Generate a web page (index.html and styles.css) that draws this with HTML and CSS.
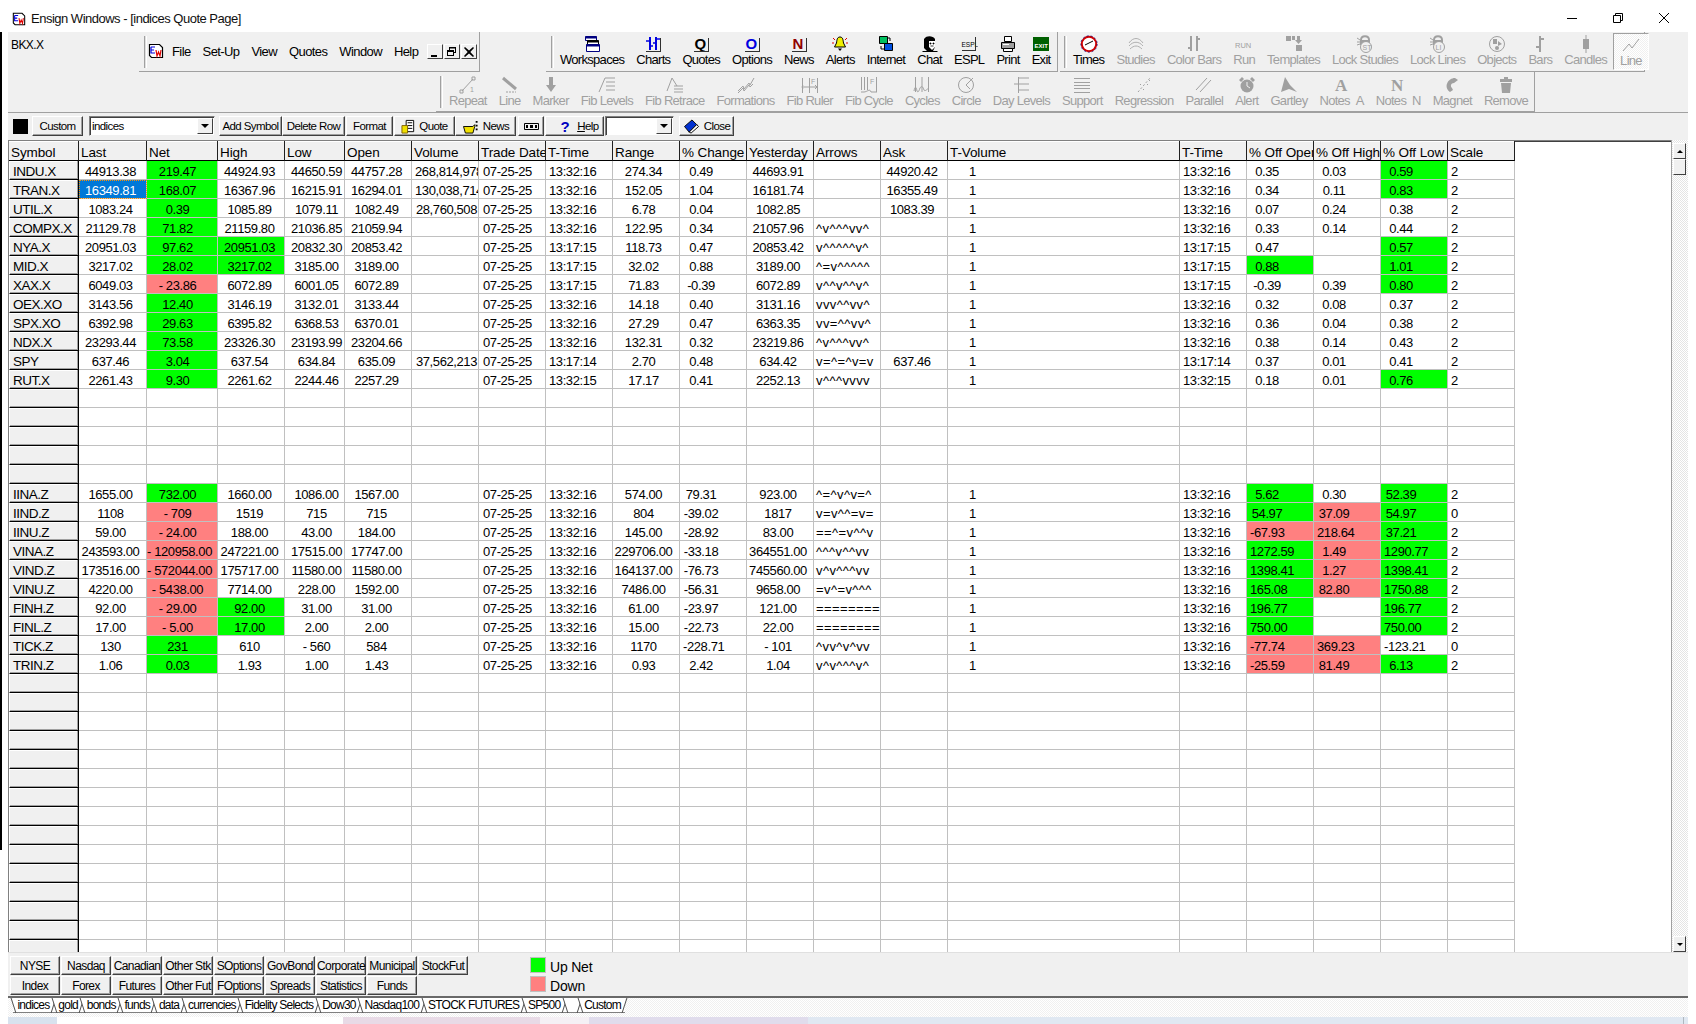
FILE: index.html
```html
<!DOCTYPE html>
<html lang="en">
<head>
<meta charset="utf-8">
<title>Ensign Windows - [indices Quote Page]</title>
<link rel="stylesheet" href="styles.css">
</head>
<body>
<svg class="defs" width="0" height="0" aria-hidden="true">
  <symbol id="ew" viewBox="0 0 16 16">
    <path d="M1.5 1.5h10l3 3v10h-11l-2-2z" fill="#fff" stroke="#000" stroke-width="1.2"/>
    <path d="M3 4v6h4M3 4h4M3 7h3" fill="none" stroke="#0000e0" stroke-width="1.2"/>
    <path d="M8 7l1 6 1.5-4 1.5 4 1-6" fill="none" stroke="#e00000" stroke-width="1.2"/>
  </symbol>
</svg>
<div class="edge"></div>
<header class="titlebar">
  <svg class="title-icon"><use href="#ew"/></svg>
  <span class="title-text">Ensign Windows - [indices Quote Page]</span>
  <div class="winctl">
    <svg width="12" height="12" viewBox="0 0 12 12"><path d="M1 6.5h10" stroke="#000" fill="none"/></svg>
    <svg width="12" height="12" viewBox="0 0 12 12"><path d="M1.5 3.5h7v7h-7zM3.5 3V1.5h7v7H9" stroke="#000" fill="none"/></svg>
    <svg width="12" height="12" viewBox="0 0 12 12"><path d="M1 1l10 10M11 1L1 11" stroke="#000" fill="none"/></svg>
  </div>
</header>
<div class="app">
  <div class="row-one">
    <div class="current-symbol">BKX.X</div>
    <div class="band menu-band">
      <i class="grip"></i>
      <svg class="menu-icon"><use href="#ew"/></svg>
      <nav class="menu"><span>File</span><span>Set-Up</span><span>View</span><span>Quotes</span><span>Window</span><span>Help</span></nav>
      <div class="mdi">
        <button class="mdi-btn"><svg width="12" height="10" viewBox="0 0 12 10"><path d="M2 8h6v2H2z"/></svg></button>
        <button class="mdi-btn"><svg width="12" height="10" viewBox="0 0 12 10"><path d="M3 0h7v6H8v3H1V3h2zM4 1.5V3h4v2h1V1.5zM2 5v3h5V5z" fill-rule="evenodd"/></svg></button>
        <button class="mdi-btn"><svg width="12" height="10" viewBox="0 0 12 10"><path d="M2 0l4 3.5L10 0l1 1-3.7 4L11 9l-1 1-4-3.5L2 10 1 9l3.7-4L1 1z"/></svg></button>
      </div>
    </div>
    <div class="band main-band">
      <i class="grip"></i>
      <div class="tb"><svg class="ic" viewBox="0 0 18 18"><path d="M2.5 1.5h11v4h-11z" fill="#fff" stroke="#000080"/><path d="M2.5 1.5h11v2h-11z" fill="#000080"/><path d="M4.5 5.5h11v4h-11z" fill="#fff" stroke="#000"/><path d="M4.5 5.5h11v2h-11z" fill="#000"/><path d="M3.5 9.5h13v7h-13z" fill="#fff" stroke="#000080"/><path d="M3.5 9.5h13v2h-13z" fill="#000080"/></svg><span>Workspaces</span></div>
      <div class="tb"><svg class="ic" viewBox="0 0 18 18"><path d="M6 2v13M12 2v13" stroke="#0000e0" stroke-width="2" fill="none"/><path d="M2 6h4M6 11h3M9 8h3M12 4h4" stroke="#0000e0" stroke-width="1.6" fill="none"/><path d="M2 16.5h14M16.5 3v14" stroke="#303030" fill="none"/></svg><span>Charts</span></div>
      <div class="tb"><svg class="ic" viewBox="0 0 18 18"><text x="2.5" y="14" class="ic-letter">Q</text><path d="M2 16.5h14M16.5 3v14" stroke="#303030" fill="none"/></svg><span>Quotes</span></div>
      <div class="tb"><svg class="ic" viewBox="0 0 18 18"><text x="2.5" y="14" class="ic-letter ic-blue">O</text><path d="M2 16.5h14M16.5 3v14" stroke="#303030" fill="none"/></svg><span>Options</span></div>
      <div class="tb"><svg class="ic" viewBox="0 0 18 18"><text x="2.5" y="14" class="ic-letter ic-red">N</text><path d="M2 16.5h14M16.5 3v14" stroke="#303030" fill="none"/></svg><span>News</span></div>
      <div class="tb"><svg class="ic" viewBox="0 0 18 18"><path d="M9 2c3 0 3 3 3.500 6l2 4H3.500l2-4C6 5 6 2 9 2z" fill="#f0f000" stroke="#000"/><path d="M7 13.500h4l-2 2.500z"/><path d="M2 3l2 2M16 3l-2 2M1 8h2M17 8h-2" stroke="#e00000" fill="none"/></svg><span>Alerts</span></div>
      <div class="tb"><svg class="ic" viewBox="0 0 18 18"><path d="M2.500 1.500h8v7h-8z" fill="#00c060" stroke="#000"/><path d="M7.500 8.500h8v7h-8z" fill="#0050e0" stroke="#000"/><path d="M4 11v3h3M13 6V3h-2" fill="none" stroke="#000"/></svg><span>Internet</span></div>
      <div class="tb"><svg class="ic" viewBox="0 0 18 18"><path d="M3 4c3-4 9-3 11 0v8l-2 4H6l-3-3z"/><path d="M8 6h6v6l-3 3-3-3z" fill="#fff"/><path d="M9 8h1v1H9zM12 8h1v1h-1zM9.500 11h3" stroke="#000" stroke-width=".8"/><path d="M1.500 16.500h15" stroke="#000"/></svg><span>Chat</span></div>
      <div class="tb"><svg class="ic" viewBox="0 0 18 18"><text x="1.500" y="12" class="ic-small">ESPL</text><path d="M2 15.500h13M15.500 2v14" stroke="#303030" fill="none"/></svg><span>ESPL</span></div>
      <div class="tb"><svg class="ic" viewBox="0 0 18 18"><path d="M5.500 1.500h7v5h-7z" fill="#fff" stroke="#000"/><path d="M2.500 7.500h13v6h-13z" fill="#a0a0a0" stroke="#000"/><path d="M4.500 13.500h9v3h-9z" fill="#fff" stroke="#000"/><path d="M4 9.500h6" stroke="#fff"/></svg><span>Print</span></div>
      <div class="tb"><svg class="ic" viewBox="0 0 18 18"><rect x="1" y="2" width="16" height="14" fill="#006000"/><text x="2.500" y="12.500" class="ic-exit">EXIT</text></svg><span>Exit</span></div>
    </div>
    <div class="band draw-band">
      <i class="grip"></i>
      <div class="tb"><svg class="ic" viewBox="0 0 18 18"><circle cx="9" cy="9" r="7.200" fill="#fff" stroke="#d00000" stroke-width="2"/><circle cx="9" cy="9" r="8.200" fill="none" stroke="#000080" stroke-width=".7" stroke-dasharray="2 2"/><path d="M5 10l4-2 4-2" stroke="#000" fill="none"/></svg><span>Times</span></div>
      <div class="tb off"><svg class="ic" viewBox="0 0 18 18"><path d="M2 8c4-6 10-6 14 0M2 11c4-5 10-5 14 0M3 14c4-4 8-4 12 0" stroke="#b0b0b0" fill="none"/></svg><span>Studies</span></div>
      <div class="tb off"><svg class="ic" viewBox="0 0 18 18"><path d="M6 1v15M12 1v15" stroke="#a0a0a0" stroke-width="2" fill="none"/><path d="M3 13h3M12 4h3" stroke="#a0a0a0" stroke-width="2" fill="none"/></svg><span>Color Bars</span></div>
      <div class="tb off"><svg class="ic" viewBox="0 0 18 18"><text x="0" y="13" class="ic-run">RUN</text></svg><span>Run</span></div>
      <div class="tb off"><svg class="ic" viewBox="0 0 18 18"><path d="M1 1h5v5H1zM7 1h3v4H7zM11 16V10h6v6z" fill="#a0a0a0"/><path d="M12 1h3v4h2l-3.500 4L10 5h2z" fill="#a0a0a0"/></svg><span>Templates</span></div>
      <div class="tb off"><svg class="ic" viewBox="0 0 18 18"><path d="M5 5c0-5 8-5 8 0" fill="none" stroke="#a0a0a0" stroke-width="2"/><rect x="4" y="5" width="10" height="5" fill="#a0a0a0"/><circle cx="10" cy="12" r="5.500" fill="#f0f0f0" stroke="#a0a0a0"/><path d="M1 3l3 2M1 7h3M1 10l3-1" stroke="#a0a0a0" fill="none"/><text x="6.500" y="14.500" class="ic-tiny">ST</text></svg><span>Lock Studies</span></div>
      <div class="tb off"><svg class="ic" viewBox="0 0 18 18"><path d="M5 5c0-5 8-5 8 0" fill="none" stroke="#a0a0a0" stroke-width="2"/><rect x="4" y="5" width="10" height="5" fill="#a0a0a0"/><circle cx="10" cy="12" r="5.500" fill="#f0f0f0" stroke="#a0a0a0"/><path d="M1 3l3 2M1 7h3M1 10l3-1" stroke="#a0a0a0" fill="none"/><text x="6.500" y="14.500" class="ic-tiny">LI</text></svg><span>Lock Lines</span></div>
      <div class="tb off"><svg class="ic" viewBox="0 0 18 18"><circle cx="9" cy="9" r="7.500" fill="none" stroke="#a0a0a0"/><path d="M5 4h4v5H5zM10 6l4 3-4 2z" fill="#a0a0a0"/><circle cx="9" cy="13" r="2" fill="#a0a0a0"/></svg><span>Objects</span></div>
      <div class="tb off"><svg class="ic" viewBox="0 0 18 18"><path d="M9 1v16" stroke="#a0a0a0" stroke-width="2"/><path d="M5 12h4M9 4h4" stroke="#a0a0a0" stroke-width="2"/></svg><span>Bars</span></div>
      <div class="tb off"><svg class="ic" viewBox="0 0 18 18"><path d="M9 0v18" stroke="#a0a0a0"/><rect x="6" y="4" width="6" height="10" fill="#a0a0a0"/></svg><span>Candles</span></div>
      <div class="tb off tb-line"><svg class="ic" viewBox="0 0 18 18"><path d="M1 15l6-7 3 4 7-9" stroke="#a0a0a0" fill="none"/></svg><span>Line</span></div>
    </div>
  </div>
  <div class="row-two">
    <div class="band tools-band">
      <i class="grip"></i>
      <div class="tb off"><svg class="ic" viewBox="0 0 18 18"><path d="M3 15L14 3" stroke="#a0a0a0" fill="none"/><path d="M1 14h3v3H1zM13 1h3v3h-3z" fill="none" stroke="#a0a0a0"/><text x="11" y="16" class="ic-tiny">1</text></svg><span>Repeat</span></div>
      <div class="tb off"><svg class="ic" viewBox="0 0 18 18"><path d="M2 2l13 11" stroke="#a0a0a0" stroke-width="3" fill="none"/><path d="M5 16h10" stroke="#a0a0a0" stroke-dasharray="2 1" fill="none"/></svg><span>Line</span></div>
      <div class="tb off"><svg class="ic" viewBox="0 0 18 18"><path d="M7 1h4v8h3l-5 7-5-7h3z" fill="#a0a0a0"/></svg><span>Marker</span></div>
      <div class="tb off"><svg class="ic" viewBox="0 0 18 18"><path d="M1 16L7 2h10M8 6h9M8 10h9M8 14h9" stroke="#a0a0a0" fill="none"/></svg><span>Fib Levels</span></div>
      <div class="tb off"><svg class="ic" viewBox="0 0 18 18"><path d="M1 15L6 2l5 8M8 10h9M8 13h9M8 16h9" stroke="#a0a0a0" fill="none"/></svg><span>Fib Retrace</span></div>
      <div class="tb off"><svg class="ic" viewBox="0 0 18 18"><path d="M1 15l5-5 1 3 5-6 1 2 4-7M1 17l5-5 1 3 5-6 1 2 3-3" stroke="#a0a0a0" fill="none"/></svg><span>Formations</span></div>
      <div class="tb off"><svg class="ic" viewBox="0 0 18 18"><path d="M1.500 2v15M8.500 2v15M16.500 2v15M1 11h14M2 9l-1 2 1 2M14 9l2 2-2 2" stroke="#a0a0a0" fill="none"/><text x="10" y="8" class="ic-tiny">F</text></svg><span>Fib Ruler</span></div>
      <div class="tb off"><svg class="ic" viewBox="0 0 18 18"><path d="M1.500 1v13M4.500 1v13M7.500 1v13M16.500 1v15M1 16h3c3 0 6-4 7 0h6" stroke="#a0a0a0" fill="none"/><text x="10" y="8" class="ic-tiny">F</text></svg><span>Fib Cycle</span></div>
      <div class="tb off"><svg class="ic" viewBox="0 0 18 18"><path d="M2.500 1v15M9 1v15M15.500 1v15M1 15c1-5 2-5 3 0 1 2 2 0 3-3 1-2 3-2 4 2 1 2 3-1 5-2" stroke="#a0a0a0" fill="none"/></svg><span>Cycles</span></div>
      <div class="tb off"><svg class="ic" viewBox="0 0 18 18"><circle cx="9" cy="9" r="7.500" fill="none" stroke="#a0a0a0"/><path d="M9 9l7-7M9 9l4 4" stroke="#a0a0a0" fill="none"/></svg><span>Circle</span></div>
      <div class="tb off"><svg class="ic" viewBox="0 0 18 18"><path d="M6.500 1v16M7 2h10M2 8h15M7 14h10" stroke="#a0a0a0" fill="none"/></svg><span>Day Levels</span></div>
      <div class="tb off"><svg class="ic" viewBox="0 0 18 18"><path d="M1 2.500h16M1 6.500h16M1 9.500h16M1 12.500h16M1 16.500h16" stroke="#a0a0a0" fill="none"/></svg><span>Support</span></div>
      <div class="tb off"><svg class="ic" viewBox="0 0 18 18"><path d="M3 16L15 2" stroke="#a0a0a0" stroke-dasharray="2 2" fill="none"/><path d="M5 8h1v1H5zM12 8h1v1h-1zM8 13h1v1H8zM14 4h1v1h-1z" fill="#a0a0a0"/></svg><span>Regression</span></div>
      <div class="tb off"><svg class="ic" viewBox="0 0 18 18"><path d="M1 14L12 2M5 16L16 4" stroke="#a0a0a0" fill="none"/></svg><span>Parallel</span></div>
      <div class="tb off"><svg class="ic" viewBox="0 0 18 18"><circle cx="9" cy="10" r="6.500" fill="#a0a0a0"/><path d="M1 4l3-3 2 2-3 3zM17 4l-3-3-2 2 3 3z" fill="#a0a0a0"/><path d="M9 6v4l3 2" stroke="#f0f0f0" fill="none"/></svg><span>Alert</span></div>
      <div class="tb off"><svg class="ic" viewBox="0 0 18 18"><path d="M1 16L5 1l5 8 7 7-8-3z" fill="#a0a0a0"/></svg><span>Gartley</span></div>
      <div class="tb off"><svg class="ic" viewBox="0 0 18 18"><text x="2" y="15" class="ic-note">A</text></svg><span>Notes &nbsp;A</span></div>
      <div class="tb off"><svg class="ic" viewBox="0 0 18 18"><text x="2" y="15" class="ic-note">N</text></svg><span>Notes &nbsp;N</span></div>
      <div class="tb off"><svg class="ic" viewBox="0 0 18 18"><path d="M7 16C0 11 5 2 12 2l3 2-4 3c-3 0-4 3-2 5l1 2z" fill="#a0a0a0"/></svg><span>Magnet</span></div>
      <div class="tb off"><svg class="ic" viewBox="0 0 18 18"><path d="M7 1h4v2h4v3H3V3h4zM4 7h10l-1 10H5z" fill="#a0a0a0"/></svg><span>Remove</span></div>
    </div>
  </div>
  <div class="format-bar">
    <span class="swatch-black"></span>
    <button class="btn w-custom">Custom</button>
    <div class="combo w-list"><span>indices</span><b class="combo-arrow"></b></div>
    <button class="btn w-add">Add Symbol</button>
    <button class="btn w-add">Delete Row</button>
    <button class="btn w-format">Format</button>
    <button class="btn w-quote"><svg width="15" height="15" viewBox="0 0 16 16"><path d="M5.500 1.500h8v12h-8z" fill="#fff" stroke="#000"/><path d="M7 4h5M7 7h5M7 10h5" stroke="#000"/><path d="M1 7h6v8H1z" fill="#f0e000" stroke="#806000"/></svg>Quote</button>
    <button class="btn w-quote"><svg width="18" height="15" viewBox="0 0 18 16"><path d="M1 8h10l2-2v2l-2 7H3z" fill="#f0e000" stroke="#000"/><path d="M15 2v2M15 6v2M15 10v2" stroke="#000" stroke-width="2"/></svg>News</button>
    <button class="btn w-kbd"><svg width="15" height="7" viewBox="0 0 15 7"><path d="M.5.500h14v6H.500z" fill="none" stroke="#000"/><path d="M2 2h2v3H2zM6 2h3v3H6zM11 2h2v3h-2z"/></svg></button>
    <button class="btn w-help"><span class="help-q">?</span><span><u>H</u>elp</span></button>
    <div class="combo w-blank"><span></span><b class="combo-arrow"></b></div>
    <button class="btn w-close"><svg width="18" height="15" viewBox="0 0 18 16"><path d="M1 8l8-7 5 5-8 8z" fill="#0030d0" stroke="#000"/><path d="M6 14l8-8 2 2-8 7z" fill="#fff" stroke="#000"/></svg>Close</button>
  </div>
  <div class="grid-area">
    <div class="grid-view">
      <table class="quotes">
        <colgroup><col class="c1"><col class="c2"><col class="c3"><col class="c4"><col class="c5"><col class="c6"><col class="c7"><col class="c8"><col class="c9"><col class="c10"><col class="c11"><col class="c12"><col class="c13"><col class="c14"><col class="c15"><col class="c16"><col class="c17"><col class="c18"><col class="c19"><col class="c20"></colgroup>
        <thead><tr><th>Symbol</th><th>Last</th><th>Net</th><th>High</th><th>Low</th><th>Open</th><th>Volume</th><th>Trade Date</th><th>T-Time</th><th>Range</th><th>% Change</th><th>Yesterday</th><th>Arrows</th><th>Ask</th><th>T-Volume</th><th>T-Time</th><th>% Off Open</th><th>% Off High</th><th>% Off Low</th><th>Scale</th></tr></thead>
        <tbody>
<tr><th>INDU.X</th><td>44913.38</td><td class="up">219.47</td><td>44924.93</td><td>44650.59</td><td>44757.28</td><td>268,814,978</td><td>07-25-25</td><td>13:32:16</td><td>274.34</td><td>0.49</td><td>44693.91</td><td></td><td>44920.42</td><td>1</td><td>13:32:16</td><td>0.35</td><td>0.03</td><td class="up">0.59</td><td>2</td></tr>
<tr><th>TRAN.X</th><td class="sel">16349.81</td><td class="up">168.07</td><td>16367.96</td><td>16215.91</td><td>16294.01</td><td>130,038,714</td><td>07-25-25</td><td>13:32:16</td><td>152.05</td><td>1.04</td><td>16181.74</td><td></td><td>16355.49</td><td>1</td><td>13:32:16</td><td>0.34</td><td>0.11</td><td class="up">0.83</td><td>2</td></tr>
<tr><th>UTIL.X</th><td>1083.24</td><td class="up">0.39</td><td>1085.89</td><td>1079.11</td><td>1082.49</td><td>28,760,508</td><td>07-25-25</td><td>13:32:16</td><td>6.78</td><td>0.04</td><td>1082.85</td><td></td><td>1083.39</td><td>1</td><td>13:32:16</td><td>0.07</td><td>0.24</td><td>0.38</td><td>2</td></tr>
<tr><th>COMPX.X</th><td>21129.78</td><td class="up">71.82</td><td>21159.80</td><td>21036.85</td><td>21059.94</td><td></td><td>07-25-25</td><td>13:32:16</td><td>122.95</td><td>0.34</td><td>21057.96</td><td>^v^^^vv^</td><td></td><td>1</td><td>13:32:16</td><td>0.33</td><td>0.14</td><td>0.44</td><td>2</td></tr>
<tr><th>NYA.X</th><td>20951.03</td><td class="up">97.62</td><td class="up">20951.03</td><td>20832.30</td><td>20853.42</td><td></td><td>07-25-25</td><td>13:17:15</td><td>118.73</td><td>0.47</td><td>20853.42</td><td>v^^^^^v^</td><td></td><td>1</td><td>13:17:15</td><td>0.47</td><td></td><td class="up">0.57</td><td>2</td></tr>
<tr><th>MID.X</th><td>3217.02</td><td class="up">28.02</td><td class="up">3217.02</td><td>3185.00</td><td>3189.00</td><td></td><td>07-25-25</td><td>13:17:15</td><td>32.02</td><td>0.88</td><td>3189.00</td><td>^=v^^^^^</td><td></td><td>1</td><td>13:17:15</td><td class="up">0.88</td><td></td><td class="up">1.01</td><td>2</td></tr>
<tr><th>XAX.X</th><td>6049.03</td><td class="down">- 23.86</td><td>6072.89</td><td>6001.05</td><td>6072.89</td><td></td><td>07-25-25</td><td>13:17:15</td><td>71.83</td><td>-0.39</td><td>6072.89</td><td>v^^v^^v^</td><td></td><td>1</td><td>13:17:15</td><td>-0.39</td><td>0.39</td><td class="up">0.80</td><td>2</td></tr>
<tr><th>OEX.XO</th><td>3143.56</td><td class="up">12.40</td><td>3146.19</td><td>3132.01</td><td>3133.44</td><td></td><td>07-25-25</td><td>13:32:16</td><td>14.18</td><td>0.40</td><td>3131.16</td><td>vvv^^vv^</td><td></td><td>1</td><td>13:32:16</td><td>0.32</td><td>0.08</td><td>0.37</td><td>2</td></tr>
<tr><th>SPX.XO</th><td>6392.98</td><td class="up">29.63</td><td>6395.82</td><td>6368.53</td><td>6370.01</td><td></td><td>07-25-25</td><td>13:32:16</td><td>27.29</td><td>0.47</td><td>6363.35</td><td>vv=^^vv^</td><td></td><td>1</td><td>13:32:16</td><td>0.36</td><td>0.04</td><td>0.38</td><td>2</td></tr>
<tr><th>NDX.X</th><td>23293.44</td><td class="up">73.58</td><td>23326.30</td><td>23193.99</td><td>23204.66</td><td></td><td>07-25-25</td><td>13:32:16</td><td>132.31</td><td>0.32</td><td>23219.86</td><td>^v^^^vv^</td><td></td><td>1</td><td>13:32:16</td><td>0.38</td><td>0.14</td><td>0.43</td><td>2</td></tr>
<tr><th>SPY</th><td>637.46</td><td class="up">3.04</td><td>637.54</td><td>634.84</td><td>635.09</td><td>37,562,213</td><td>07-25-25</td><td>13:17:14</td><td>2.70</td><td>0.48</td><td>634.42</td><td>v=^=^v=v</td><td>637.46</td><td>1</td><td>13:17:14</td><td>0.37</td><td>0.01</td><td>0.41</td><td>2</td></tr>
<tr><th>RUT.X</th><td>2261.43</td><td class="up">9.30</td><td>2261.62</td><td>2244.46</td><td>2257.29</td><td></td><td>07-25-25</td><td>13:32:15</td><td>17.17</td><td>0.41</td><td>2252.13</td><td>v^^^vvvv</td><td></td><td>1</td><td>13:32:15</td><td>0.18</td><td>0.01</td><td class="up">0.76</td><td>2</td></tr>
<tr><th></th><td></td><td></td><td></td><td></td><td></td><td></td><td></td><td></td><td></td><td></td><td></td><td></td><td></td><td></td><td></td><td></td><td></td><td></td><td></td></tr>
<tr><th></th><td></td><td></td><td></td><td></td><td></td><td></td><td></td><td></td><td></td><td></td><td></td><td></td><td></td><td></td><td></td><td></td><td></td><td></td><td></td></tr>
<tr><th></th><td></td><td></td><td></td><td></td><td></td><td></td><td></td><td></td><td></td><td></td><td></td><td></td><td></td><td></td><td></td><td></td><td></td><td></td><td></td></tr>
<tr><th></th><td></td><td></td><td></td><td></td><td></td><td></td><td></td><td></td><td></td><td></td><td></td><td></td><td></td><td></td><td></td><td></td><td></td><td></td><td></td></tr>
<tr><th></th><td></td><td></td><td></td><td></td><td></td><td></td><td></td><td></td><td></td><td></td><td></td><td></td><td></td><td></td><td></td><td></td><td></td><td></td><td></td></tr>
<tr><th>IINA.Z</th><td>1655.00</td><td class="up">732.00</td><td>1660.00</td><td>1086.00</td><td>1567.00</td><td></td><td>07-25-25</td><td>13:32:16</td><td>574.00</td><td>79.31</td><td>923.00</td><td>^=^v^v=^</td><td></td><td>1</td><td>13:32:16</td><td class="up">5.62</td><td>0.30</td><td class="up">52.39</td><td>2</td></tr>
<tr><th>IIND.Z</th><td>1108</td><td class="down">- 709</td><td>1519</td><td>715</td><td>715</td><td></td><td>07-25-25</td><td>13:32:16</td><td>804</td><td>-39.02</td><td>1817</td><td>v=v^^=v=</td><td></td><td>1</td><td>13:32:16</td><td class="up">54.97</td><td class="down">37.09</td><td class="up">54.97</td><td>0</td></tr>
<tr><th>IINU.Z</th><td>59.00</td><td class="down">- 24.00</td><td>188.00</td><td>43.00</td><td>184.00</td><td></td><td>07-25-25</td><td>13:32:16</td><td>145.00</td><td>-28.92</td><td>83.00</td><td>==^=v^^v</td><td></td><td>1</td><td>13:32:16</td><td class="down">-67.93</td><td class="down">218.64</td><td class="up">37.21</td><td>2</td></tr>
<tr><th>VINA.Z</th><td>243593.00</td><td class="down">- 120958.00</td><td>247221.00</td><td>17515.00</td><td>17747.00</td><td></td><td>07-25-25</td><td>13:32:16</td><td>229706.00</td><td>-33.18</td><td>364551.00</td><td>^^^v^^vv</td><td></td><td>1</td><td>13:32:16</td><td class="up">1272.59</td><td class="down">1.49</td><td class="up">1290.77</td><td>2</td></tr>
<tr><th>VIND.Z</th><td>173516.00</td><td class="down">- 572044.00</td><td>175717.00</td><td>11580.00</td><td>11580.00</td><td></td><td>07-25-25</td><td>13:32:16</td><td>164137.00</td><td>-76.73</td><td>745560.00</td><td>v^v^^^vv</td><td></td><td>1</td><td>13:32:16</td><td class="up">1398.41</td><td class="down">1.27</td><td class="up">1398.41</td><td>2</td></tr>
<tr><th>VINU.Z</th><td>4220.00</td><td class="down">- 5438.00</td><td>7714.00</td><td>228.00</td><td>1592.00</td><td></td><td>07-25-25</td><td>13:32:16</td><td>7486.00</td><td>-56.31</td><td>9658.00</td><td>=v^=v^^^</td><td></td><td>1</td><td>13:32:16</td><td class="up">165.08</td><td class="down">82.80</td><td class="up">1750.88</td><td>2</td></tr>
<tr><th>FINH.Z</th><td>92.00</td><td class="down">- 29.00</td><td class="up">92.00</td><td>31.00</td><td>31.00</td><td></td><td>07-25-25</td><td>13:32:16</td><td>61.00</td><td>-23.97</td><td>121.00</td><td>========</td><td></td><td>1</td><td>13:32:16</td><td class="up">196.77</td><td></td><td class="up">196.77</td><td>2</td></tr>
<tr><th>FINL.Z</th><td>17.00</td><td class="down">- 5.00</td><td class="up">17.00</td><td>2.00</td><td>2.00</td><td></td><td>07-25-25</td><td>13:32:16</td><td>15.00</td><td>-22.73</td><td>22.00</td><td>========</td><td></td><td>1</td><td>13:32:16</td><td class="up">750.00</td><td></td><td class="up">750.00</td><td>2</td></tr>
<tr><th>TICK.Z</th><td>130</td><td class="up">231</td><td>610</td><td>- 560</td><td>584</td><td></td><td>07-25-25</td><td>13:32:16</td><td>1170</td><td>-228.71</td><td>- 101</td><td>^vv^v^vv</td><td></td><td>1</td><td>13:32:16</td><td class="down">-77.74</td><td class="down">369.23</td><td>-123.21</td><td>0</td></tr>
<tr><th>TRIN.Z</th><td>1.06</td><td class="up">0.03</td><td>1.93</td><td>1.00</td><td>1.43</td><td></td><td>07-25-25</td><td>13:32:16</td><td>0.93</td><td>2.42</td><td>1.04</td><td>v^v^^^v^</td><td></td><td>1</td><td>13:32:16</td><td class="down">-25.59</td><td class="down">81.49</td><td class="up">6.13</td><td>2</td></tr>
<tr><th></th><td></td><td></td><td></td><td></td><td></td><td></td><td></td><td></td><td></td><td></td><td></td><td></td><td></td><td></td><td></td><td></td><td></td><td></td><td></td></tr>
<tr><th></th><td></td><td></td><td></td><td></td><td></td><td></td><td></td><td></td><td></td><td></td><td></td><td></td><td></td><td></td><td></td><td></td><td></td><td></td><td></td></tr>
<tr><th></th><td></td><td></td><td></td><td></td><td></td><td></td><td></td><td></td><td></td><td></td><td></td><td></td><td></td><td></td><td></td><td></td><td></td><td></td><td></td></tr>
<tr><th></th><td></td><td></td><td></td><td></td><td></td><td></td><td></td><td></td><td></td><td></td><td></td><td></td><td></td><td></td><td></td><td></td><td></td><td></td><td></td></tr>
<tr><th></th><td></td><td></td><td></td><td></td><td></td><td></td><td></td><td></td><td></td><td></td><td></td><td></td><td></td><td></td><td></td><td></td><td></td><td></td><td></td></tr>
<tr><th></th><td></td><td></td><td></td><td></td><td></td><td></td><td></td><td></td><td></td><td></td><td></td><td></td><td></td><td></td><td></td><td></td><td></td><td></td><td></td></tr>
<tr><th></th><td></td><td></td><td></td><td></td><td></td><td></td><td></td><td></td><td></td><td></td><td></td><td></td><td></td><td></td><td></td><td></td><td></td><td></td><td></td></tr>
<tr><th></th><td></td><td></td><td></td><td></td><td></td><td></td><td></td><td></td><td></td><td></td><td></td><td></td><td></td><td></td><td></td><td></td><td></td><td></td><td></td></tr>
<tr><th></th><td></td><td></td><td></td><td></td><td></td><td></td><td></td><td></td><td></td><td></td><td></td><td></td><td></td><td></td><td></td><td></td><td></td><td></td><td></td></tr>
<tr><th></th><td></td><td></td><td></td><td></td><td></td><td></td><td></td><td></td><td></td><td></td><td></td><td></td><td></td><td></td><td></td><td></td><td></td><td></td><td></td></tr>
<tr><th></th><td></td><td></td><td></td><td></td><td></td><td></td><td></td><td></td><td></td><td></td><td></td><td></td><td></td><td></td><td></td><td></td><td></td><td></td><td></td></tr>
<tr><th></th><td></td><td></td><td></td><td></td><td></td><td></td><td></td><td></td><td></td><td></td><td></td><td></td><td></td><td></td><td></td><td></td><td></td><td></td><td></td></tr>
<tr><th></th><td></td><td></td><td></td><td></td><td></td><td></td><td></td><td></td><td></td><td></td><td></td><td></td><td></td><td></td><td></td><td></td><td></td><td></td><td></td></tr>
<tr><th></th><td></td><td></td><td></td><td></td><td></td><td></td><td></td><td></td><td></td><td></td><td></td><td></td><td></td><td></td><td></td><td></td><td></td><td></td><td></td></tr>
<tr><th></th><td></td><td></td><td></td><td></td><td></td><td></td><td></td><td></td><td></td><td></td><td></td><td></td><td></td><td></td><td></td><td></td><td></td><td></td><td></td></tr>
        </tbody>
      </table>
    </div>
    <div class="scrollbar">
      <span class="sb-btn"><i class="tri-up"></i></span>
      <span class="sb-thumb"></span>
      <span class="sb-track"></span>
      <span class="sb-btn"><i class="tri-down"></i></span>
    </div>
  </div>
  <div class="bottom-panel">
    <div class="pages">
      <button class="page">NYSE</button><button class="page">Nasdaq</button><button class="page">Canadian</button><button class="page">Other Stk</button><button class="page">SOptions</button><button class="page">GovBond</button><button class="page">Corporate</button><button class="page">Municipal</button><button class="page">StockFut</button>
      <button class="page">Index</button><button class="page">Forex</button><button class="page">Futures</button><button class="page">Other Fut</button><button class="page">FOptions</button><button class="page">Spreads</button><button class="page">Statistics</button><button class="page">Funds</button>
    </div>
    <div class="legend">
      <div class="legend-row"><i class="sw sw-up"></i><span class="legend-label">Up Net</span></div>
      <div class="legend-row"><i class="sw sw-down"></i><span class="legend-label">Down</span></div>
    </div>
  </div>
  <div class="tabs">
    <span class="tab active">indices</span><span class="tab">gold</span><span class="tab">bonds</span><span class="tab">funds</span><span class="tab">data</span><span class="tab">currencies</span><span class="tab">Fidelity Selects</span><span class="tab">Dow30</span><span class="tab">Nasdaq100</span><span class="tab">STOCK FUTURES</span><span class="tab">SP500</span><span class="tab tab-empty"></span><span class="tab">Custom</span>
  </div>
  <div class="desktop-strip"></div>
</div>
</body>
</html>
```
FILE: styles.css
```css
* { box-sizing: border-box; }
html, body { margin: 0; padding: 0; background: #fff; }
body {
  width: 1696px; height: 1024px; overflow: hidden; position: relative;
  font-family: "Liberation Sans", Arial, sans-serif;
  font-size: 13px; color: #000;
}
.defs { position: absolute; }
.edge { position: absolute; left: 0; top: 32px; width: 2px; height: 818px; background: #000; }

.titlebar { height: 32px; display: flex; align-items: center; padding: 0 0 0 12px; background: #fff; }
.title-icon { width: 14px; height: 14px; margin-top: 5px; flex: none; }
.title-text { margin: 5px 0 0 5px; font-size: 13px; letter-spacing: -.5px; color: #101010; white-space: nowrap; }
.winctl { margin-left: auto; margin-top: 4px; display: flex; gap: 34px; padding-right: 26px; }

.app { margin-left: 8px; width: 1680px; height: 992px; background: #f0f0f0; display: flex; flex-direction: column; }

.row-one { height: 40px; display: flex; flex: none; }
.current-symbol { width: 131px; padding: 6px 0 0 3px; font-size: 12px; letter-spacing: -.6px; }
.band { display: flex; height: 40px; border-bottom: 1px solid #a0a0a0; border-right: 1px solid #a0a0a0; padding-left: 5px; position: relative; }
.grip { flex: none; width: 3px; height: 32px; margin-top: 4px; border-left: 1px solid #a0a0a0; border-right: 1px solid #fff; background: #e0e0e0; }
.menu-band { width: 341px; align-items: flex-start; padding-right: 2px; }
.menu-icon { width: 16px; height: 16px; margin: 11px 8px 0 1px; flex: none; }
.menu { display: flex; gap: 12px; font-size: 13px; letter-spacing: -.6px; padding-top: 12px; white-space: nowrap; }
.mdi { display: flex; gap: 1px; margin: 12px 0 0 auto; }
.mdi-btn { width: 16px; height: 15px; padding: 0; display: flex; align-items: center; justify-content: center; background: #f0f0f0; border: 1px solid; border-color: #fff #404040 #404040 #fff; }
.main-band { margin-left: 66px; width: 512px; }
.draw-band { margin-left: 2px; width: 585px; padding-left: 4px; }

.tb { display: flex; flex-direction: column; align-items: center; padding: 3px 6px 0; line-height: 14px; letter-spacing: -.7px; white-space: nowrap; flex: none; }
.ic { width: 18px; height: 18px; flex: none; }
.off { color: #a0a0a0; }
.tb-line { height: 37px; margin-top: 1px; padding-top: 2px; border: 1px solid; border-color: #a0a0a0 #fff #fff #a0a0a0; background: repeating-conic-gradient(#fff 0 25%, #f0f0f0 0 50%) 0 0 / 2px 2px; }
.ic-letter { font: bold 15px "Liberation Sans", sans-serif; letter-spacing: 0; fill: #000; }
.ic-blue { fill: #0000e0; }
.ic-red { fill: #900000; }
.ic-small { font: 6.500px "Liberation Sans", sans-serif; letter-spacing: 0; fill: #000; }
.ic-exit { font: bold 6px "Liberation Sans", sans-serif; letter-spacing: 0; fill: #fff; }
.ic-run { font: 7.500px "Liberation Sans", sans-serif; letter-spacing: 0; fill: #a0a0a0; }
.ic-tiny { font: 7px "Liberation Sans", sans-serif; letter-spacing: 0; fill: #a0a0a0; }
.ic-note { font: bold 17px "Liberation Serif", serif; letter-spacing: 0; fill: #a0a0a0; }

.row-two { height: 41px; flex: none; display: flex; border-bottom: 1px solid #a0a0a0; }
.tools-band { margin-left: 428px; width: 1099px; height: 41px; padding-left: 4px; border-bottom: 2px solid #a0a0a0; }
.tools-band .tb { padding-top: 4px; }

.format-bar { height: 27px; flex: none; display: flex; align-items: flex-start; padding: 3px 0 0 5px; font-size: 11.5px; letter-spacing: -.6px; }
.swatch-black { width: 15px; height: 15px; margin: 3px 4px 0 0; background: #000; }
.btn { height: 20px; padding: 0; display: flex; align-items: center; justify-content: center; gap: 3px; font: inherit; letter-spacing: inherit; color: #000; background: #f0f0f0; border: 1px solid; border-color: #fff #404040 #404040 #fff; box-shadow: inset -1px -1px 0 #a0a0a0; white-space: nowrap; flex: none; }
.w-custom { width: 51px; margin-right: 6px; }
.w-list { width: 126px; margin-right: 4px; }
.w-add { width: 63px; }
.w-format { width: 47px; margin-left: 1px; margin-right: 1px; }
.w-quote { width: 61px; }
.w-kbd { width: 26px; margin-left: 2px; margin-right: 1px; }
.w-help { width: 59px; padding-left: 10px; }
.w-blank { width: 69px; margin: 0 5px 0 1px; }
.w-close { width: 55px; }
.help-q { font: bold 15px "Liberation Sans", sans-serif; color: #0000c0; margin-right: 5px; }
.combo { height: 20px; display: flex; justify-content: space-between; align-items: center; padding-left: 2px; background: #fff; border: 1px solid; border-color: #808080 #f0f0f0 #f0f0f0 #808080; box-shadow: inset 1px 1px 0 #404040; }
.combo-arrow { width: 16px; height: 16px; margin-right: 1px; background: #f0f0f0; border: 1px solid; border-color: #fff #404040 #404040 #fff; position: relative; }
.combo-arrow::after { content: ""; position: absolute; left: 3px; top: 5px; border: 4px solid transparent; border-top-color: #000; border-bottom-width: 0; }

.grid-area { height: 812px; flex: none; display: flex; }
.grid-view { width: 1663px; height: 812px; overflow: hidden; background: #fff; border-top: 1px solid #808080; border-left: 1px solid #808080; box-shadow: inset 0 1px 0 #404040; }
.quotes { table-layout: fixed; width: 1506px; border-collapse: separate; border-spacing: 0; font-size: 13px; letter-spacing: -.4px; }
.quotes th, .quotes td { overflow: hidden; white-space: nowrap; padding: 0; font-weight: normal; }
.quotes thead th { height: 20px; line-height: 15px; text-align: left; padding: 4px 0 0 2px; font-size: 13.5px; letter-spacing: -.1px; background: #f0f0f0; border-right: 1px solid #202020; border-bottom: 1px solid #000; box-shadow: inset 0 1px 0 #fff; }
.quotes tbody th { height: 19px; line-height: 15px; text-align: left; padding: 3px 0 0 3px; font-size: 13.5px; letter-spacing: -.5px; background: #f0f0f0; border-left: 1px solid #fff; border-right: 1px solid #000; border-bottom: 1px solid #000; box-shadow: inset -1px -1px 0 #a0a0a0, inset 0 1px 0 #fff; }
.quotes td { height: 19px; line-height: 15px; text-align: center; border-right: 1px solid #c0c0c0; border-bottom: 1px solid #c0c0c0; padding-top: 3px; }
.c1 { width: 70px; } .c2 { width: 68px; } .c3 { width: 71px; } .c4 { width: 67px; } .c5 { width: 60px; }
.c6 { width: 67px; } .c7 { width: 67px; } .c8 { width: 67px; } .c9 { width: 67px; } .c10 { width: 67px; }
.c11 { width: 67px; } .c12 { width: 67px; } .c13 { width: 67px; } .c14 { width: 67px; } .c15 { width: 232px; }
.c16 { width: 67px; } .c17 { width: 67px; } .c18 { width: 67px; } .c19 { width: 67px; } .c20 { width: 67px; }
.quotes td:nth-child(2) { padding-right: 4px; }
.quotes td:nth-child(3) { padding-right: 9px; }
.quotes td:nth-child(4) { padding-right: 3px; }
.quotes td:nth-child(5) { padding-left: 4px; }
.quotes td:nth-child(6) { padding-right: 3px; }
.quotes td:nth-child(7) { padding-left: 3px; }
.quotes td:nth-child(8) { text-align: left; padding-left: 4px; }
.quotes td:nth-child(9) { text-align: left; padding-left: 3px; }
.quotes td:nth-child(10) { padding-right: 5px; }
.quotes td:nth-child(11) { padding: 3px 27px 0 3px; }
.quotes td:nth-child(12) { padding-right: 4px; }
.quotes td:nth-child(13) { text-align: left; padding-left: 2px; font-size: 13px; letter-spacing: .4px; }
.quotes td:nth-child(14) { padding-right: 4px; }
.quotes td:nth-child(15) { text-align: left; padding-left: 21px; }
.quotes td:nth-child(16) { text-align: left; padding-left: 3px; }
.quotes td:nth-child(17), .quotes td:nth-child(18), .quotes td:nth-child(19) { padding: 3px 29px 0 3px; }
.quotes td:nth-child(20) { text-align: left; padding-left: 3px; }
.quotes td.up { background: #00ff00; }
.quotes td.down { background: #ff8080; }
.quotes td.sel { background: #0078d7; color: #fff; outline: 1px dotted #ff9000; outline-offset: -1px; }

.scrollbar { width: 17px; height: 812px; padding-left: 1px; padding-right: 2px; display: flex; flex-direction: column; background: repeating-conic-gradient(#fff 0 25%, #e4e4e4 0 50%) 0 0 / 2px 2px; border-left: 1px solid #a0a0a0; }
.sb-btn, .sb-thumb { flex: none; height: 16px; background: #f0f0f0; border: 1px solid; border-color: #fff #404040 #404040 #fff; display: flex; align-items: center; justify-content: center; }
.sb-btn:first-child { margin-top: 3px; }
.sb-track { flex: 1; }
.tri-up { border: 3px solid transparent; border-bottom: 3px solid #000; border-top-width: 0; }
.tri-down { border: 3px solid transparent; border-top: 3px solid #000; border-bottom-width: 0; }

.bottom-panel { height: 46px; flex: none; display: flex; padding: 3px 0 0 2px; border-top: 1px solid #e0e0e0; border-bottom: 2px solid #696969; }
.pages { display: grid; grid-template-columns: repeat(9, 50px); grid-auto-rows: 19px; column-gap: 1px; row-gap: 1px; width: 458px; align-content: start; }
.page { padding: 0; font-family: inherit; font-size: 12px; letter-spacing: -.6px; color: #000; white-space: nowrap; background: #f0f0f0; border: 1px solid; border-color: #fff #404040 #404040 #fff; box-shadow: inset -1px -1px 0 #a0a0a0; }
.legend { margin: 1px 0 0 62px; display: flex; flex-direction: column; gap: 3px; font-size: 14px; letter-spacing: -.2px; }
.legend-row { display: flex; align-items: center; gap: 4px; height: 16px; }
.legend-label { padding-top: 4px; }
.sw { width: 16px; height: 16px; border: 1px solid #c0c0c0; }
.sw-up { background: #00ff00; }
.sw-down { background: #ff8080; }

.tabs { height: 19px; flex: none; display: flex; padding-left: 5px; align-items: flex-start; background: repeating-conic-gradient(#fff 0 25%, #f0f0f0 0 50%) 0 0 / 2px 2px; font-size: 12px; letter-spacing: -.75px; }
.tab { position: relative; height: 15px; line-height: 15px; padding: 0 4.4px; white-space: nowrap; background: #fff; border-bottom: 1px solid #808080; }
.tab::before, .tab::after { content: ""; position: absolute; top: 0; bottom: -1px; width: 1px; background: #505050; }
.tab::before { left: 0; transform: skewX(18deg); }
.tab::after { right: 0; transform: skewX(-18deg); }
.tab-empty { width: 15px; }

.desktop-strip { flex: 1; background: linear-gradient(90deg, #d8e2ee 0 49px, #fff 49px 335px, #e8dae6 335px 532px, #f5f0f5 532px 581px, #e0dcec 581px 800px, #e0e8f2 800px 1675px, #b0b8c0 1675px 1676px, #e0e8f2 1676px); }
```
